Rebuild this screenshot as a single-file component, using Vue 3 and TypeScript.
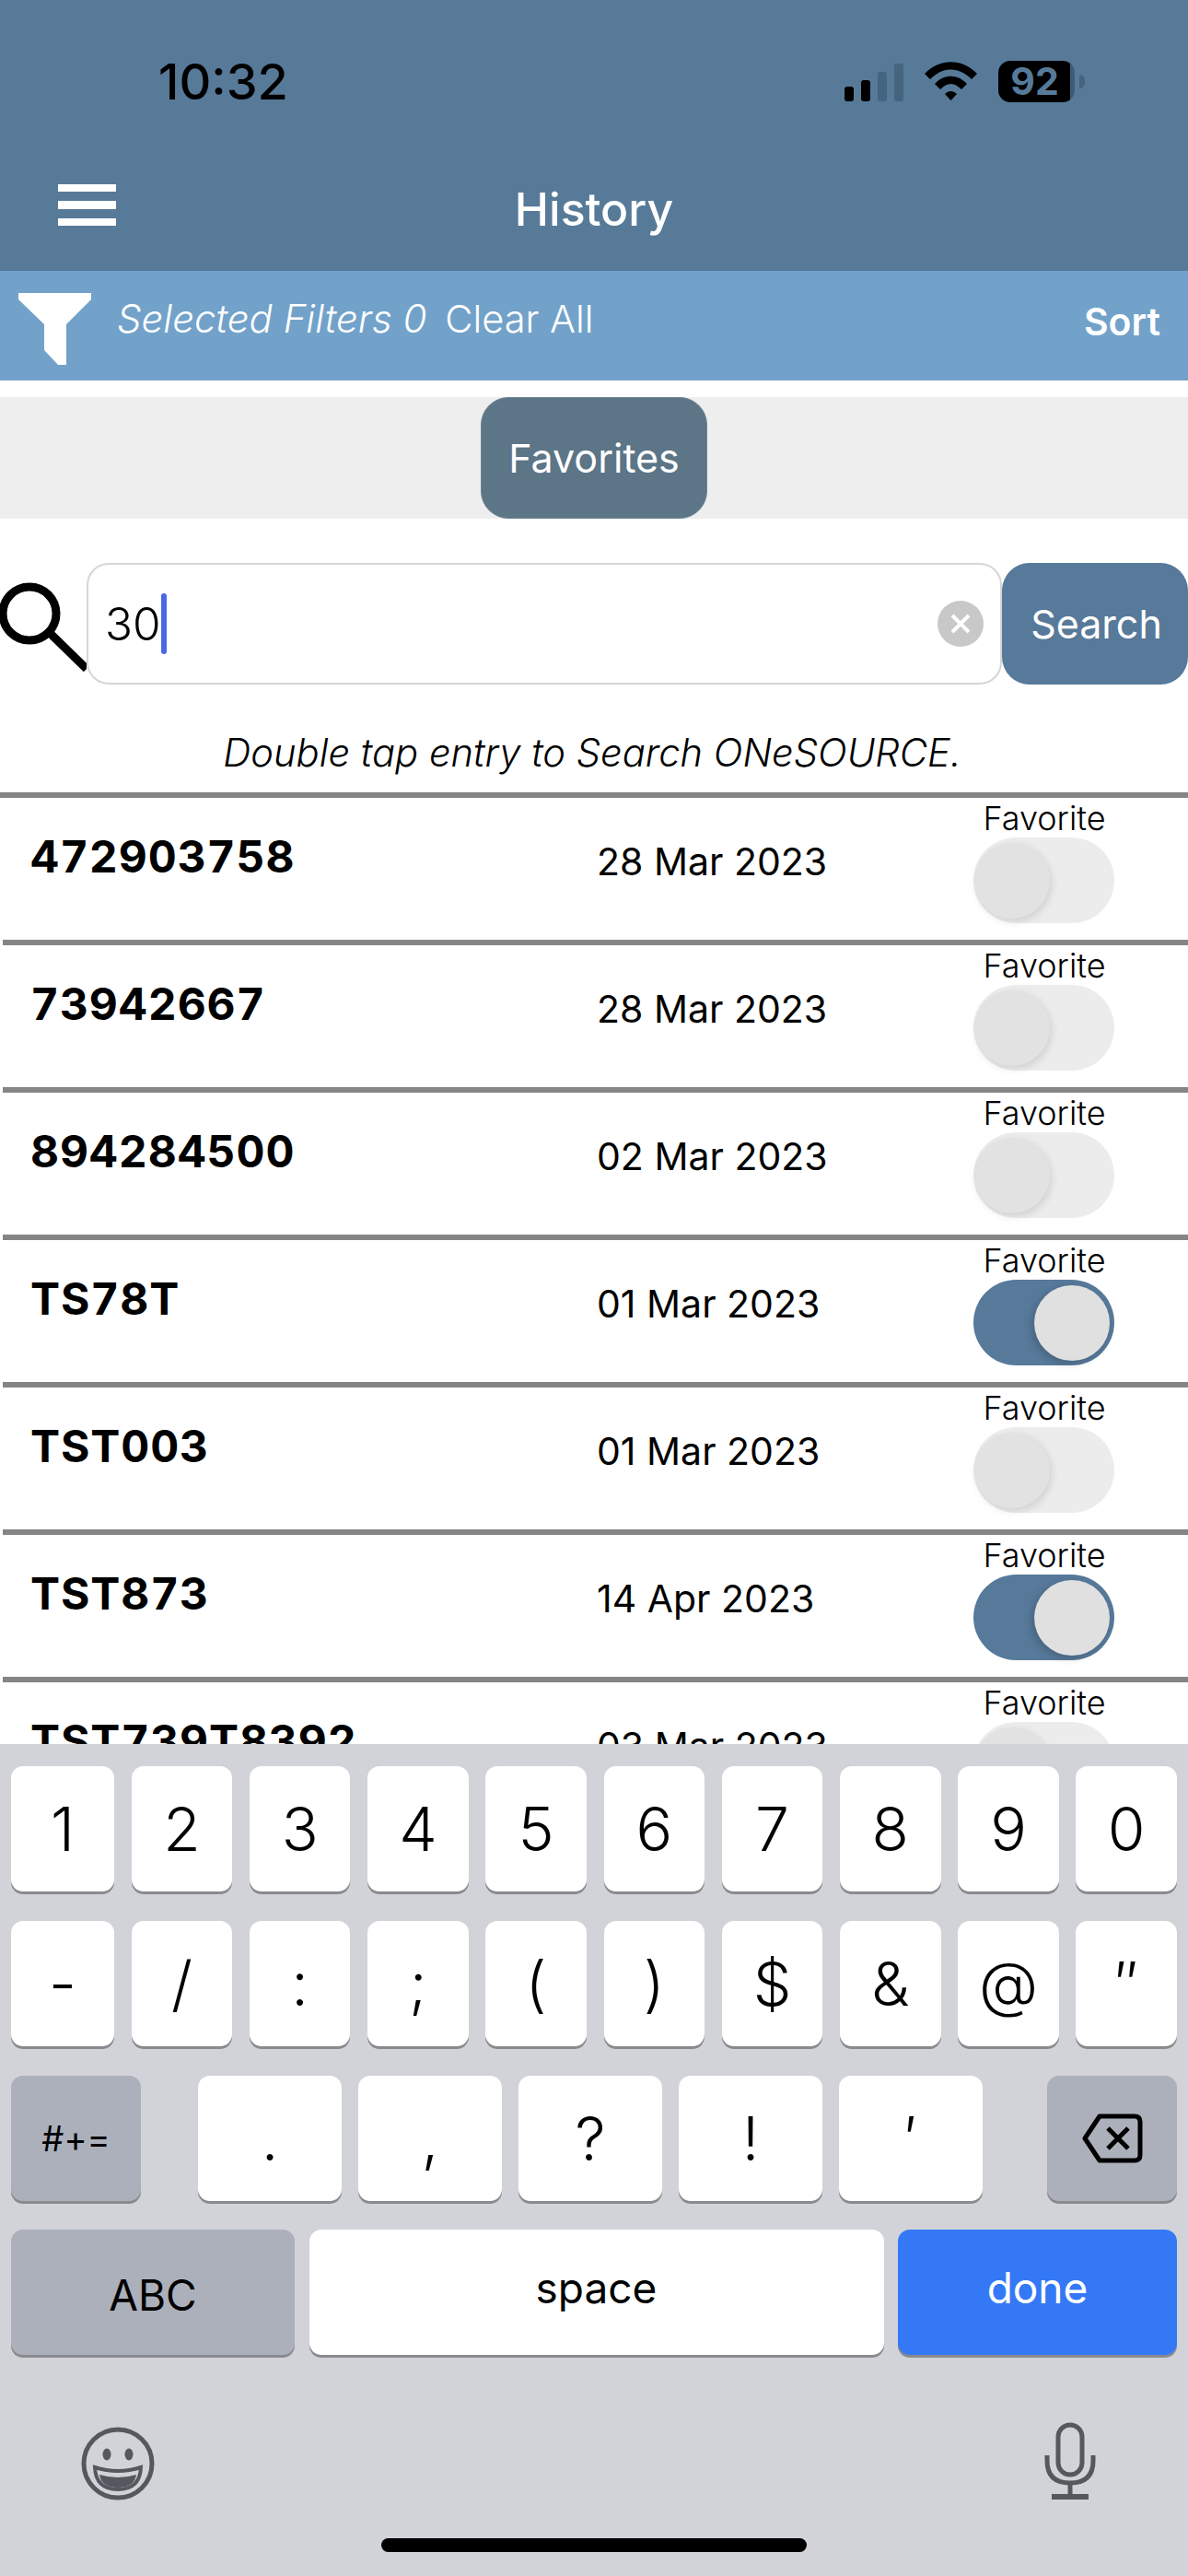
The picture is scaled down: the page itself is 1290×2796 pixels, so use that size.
<script setup lang="ts">
interface HistoryRow {
  name: string;
  date: string;
  favorite: boolean;
}

const rows: HistoryRow[] = [
  { name: '472903758', date: '28 Mar 2023', favorite: false },
  { name: '73942667', date: '28 Mar 2023', favorite: false },
  { name: '894284500', date: '02 Mar 2023', favorite: false },
  { name: 'TS78T', date: '01 Mar 2023', favorite: true },
  { name: 'TST003', date: '01 Mar 2023', favorite: false },
  { name: 'TST873', date: '14 Apr 2023', favorite: true },
  { name: 'TST739T8392', date: '03 Mar 2023', favorite: false },
];

const digits = ['1', '2', '3', '4', '5', '6', '7', '8', '9', '0'];
const symbols = ['-', '/', ':', ';', '(', ')', '$', '&', '@', '″'];
const punctuation = ['.', ',', '?', '!', '′'];
</script>

<template>
  <div class="screen">
    <header class="header">
      <div class="status">
        <span class="time">10:32</span>
        <div class="status-icons">
          <div class="signal">
            <i class="bar on b1"></i>
            <i class="bar on b2"></i>
            <i class="bar b3"></i>
            <i class="bar b4"></i>
          </div>
          <svg class="wifi" width="57" height="42" viewBox="0 0 57 42">
            <path d="M0 13C16-4 41-4 57 13L51 19C37 5 20 5 6 19Z" />
            <path d="M11 24C21 13 36 13 46 24L40 30C32 22 25 22 17 30Z" />
            <path d="M22 35C26 31 31 31 35 35L28.5 42Z" />
          </svg>
          <div class="battery"><span class="battery-level">92</span></div>
          <i class="battery-tip"></i>
        </div>
      </div>
      <div class="nav">
        <div class="menu"><i></i><i></i><i></i></div>
        <h1 class="title">History</h1>
      </div>
    </header>

    <div class="filter-bar">
      <svg class="funnel" width="80" height="80" viewBox="0 0 80 80">
        <polygon points="0,1 79,1 79,8 52,35 52,79 43,79 28,63 28,35 0,8" fill="#fff" />
      </svg>
      <span class="selected">Selected Filters 0</span>
      <span class="clear">Clear All</span>
      <span class="sort">Sort</span>
    </div>

    <div class="tabs">
      <button class="favorites">Favorites</button>
    </div>

    <div class="search-row">
      <svg class="magnifier" width="94" height="100" viewBox="0 0 94 100">
        <circle cx="32" cy="37" r="29" fill="none" stroke="#000" stroke-width="9" />
        <line x1="55" y1="59" x2="94" y2="97" stroke="#000" stroke-width="9" />
      </svg>
      <div class="search-input">
        <span class="typed">30</span><i class="caret"></i>
        <span class="clear-btn">
          <svg width="22" height="22" viewBox="0 0 22 22">
            <path d="M2 2L20 20M20 2L2 20" stroke="#fff" stroke-width="4" />
          </svg>
        </span>
      </div>
      <button class="search-btn">Search</button>
    </div>

    <p class="hint">Double tap entry to Search ONeSOURCE.</p>

    <div class="list">
      <div v-for="(row, i) in rows" :key="row.name" class="row" :class="{ first: i === 0 }">
        <span class="row-name">{{ row.name }}</span>
        <span class="row-date">{{ row.date }}</span>
        <div class="row-fav">
          <span class="fav-label">Favorite</span>
          <div class="toggle" :class="{ on: row.favorite }"><i class="thumb"></i></div>
        </div>
      </div>
    </div>

    <div class="keyboard">
      <div class="key-grid">
        <div v-for="k in digits" :key="k" class="key">{{ k }}</div>
      </div>
      <div class="key-grid second">
        <div v-for="k in symbols" :key="k" class="key">{{ k }}</div>
      </div>
      <div class="key-row third">
        <div class="key gray small">#+=</div>
        <div class="punct">
          <div v-for="k in punctuation" :key="k" class="key">{{ k }}</div>
        </div>
        <div class="key gray back">
          <svg width="66" height="54" viewBox="0 0 66 54" fill="none" stroke="#000" stroke-width="5">
            <path d="M19 3H57Q63 3 63 9V45Q63 51 57 51H19L3 27Z" stroke-linejoin="round" />
            <path d="M28 16L50 38M50 16L28 38" stroke-width="5" />
          </svg>
        </div>
      </div>
      <div class="key-row fourth">
        <div class="key gray word abc"><span>ABC</span></div>
        <div class="key word space"><span>space</span></div>
        <div class="key word done"><span>done</span></div>
      </div>
      <div class="kb-bottom">
        <svg class="emoji" width="80" height="80" viewBox="0 0 80 80" fill="none" stroke="#55585f" stroke-width="5">
          <circle cx="40" cy="40" r="37" />
          <ellipse cx="28" cy="30" rx="4.5" ry="6.5" fill="#55585f" stroke="none" />
          <ellipse cx="52" cy="30" rx="4.5" ry="6.5" fill="#55585f" stroke="none" />
          <path d="M15 44Q40 52 65 44Q64 68 40 68Q16 68 15 44Z" stroke-width="4" />
          <path d="M20 52Q40 58 60 52Q58 66 40 66Q22 66 20 52Z" fill="#55585f" stroke="none" />
        </svg>
        <svg width="56" height="84" viewBox="0 0 56 84" fill="none" stroke="#55585f" stroke-width="5">
          <rect x="15" y="3" width="26" height="54" rx="13" />
          <path d="M3 36V42Q3 66 28 66Q53 66 53 42V36" />
          <path d="M28 66V80" />
          <path d="M8 81H48" stroke-width="6" />
        </svg>
      </div>
      <div class="home-bar"></div>
    </div>
  </div>
</template>

<style scoped>
.screen {
  display: flex;
  flex-direction: column;
  width: 1290px;
  height: 2796px;
  overflow: hidden;
  background: #fff;
  font-family: Inter, "Liberation Sans", sans-serif;
  color: #000;
}

.header {
  height: 294px;
  background: #577a99;
}

.status {
  display: flex;
  justify-content: space-between;
  align-items: center;
  height: 176px;
  padding: 0 112px 0 172px;
  box-sizing: border-box;
}

.time {
  font-size: 54px;
  font-weight: 500;
}

.status-icons {
  display: flex;
  align-items: center;
}

.signal {
  display: flex;
  align-items: flex-end;
  gap: 7.5px;
  height: 41px;
  margin-top: 2px;
}

.bar {
  display: block;
  width: 10.5px;
  border-radius: 3px;
  background: #456480;
}

.bar.on {
  background: #000;
}

.b1 { height: 16px; }
.b2 { height: 23px; }
.b3 { height: 32px; }
.b4 { height: 41px; }

.wifi {
  margin-left: 23px;
  fill: #000;
}

.battery {
  display: flex;
  align-items: center;
  justify-content: center;
  width: 83px;
  height: 45px;
  margin-left: 23px;
  border-radius: 13px;
  background: linear-gradient(90deg, #000 94%, #3f5c77 94%);
}

.battery-level {
  padding-right: 4px;
  color: #577a99;
  font-size: 41px;
  font-weight: 700;
  line-height: 1;
}

.battery-tip {
  display: block;
  width: 6px;
  height: 15px;
  margin-left: 5px;
  border-radius: 0 8px 8px 0;
  background: #456480;
}

.nav {
  display: grid;
  grid-template-columns: 1fr auto 1fr;
  align-items: center;
  height: 102px;
  padding: 0 63px;
}

.menu {
  display: flex;
  flex-direction: column;
  gap: 10px;
  width: 63px;
  margin-top: -9px;
}

.menu i {
  display: block;
  height: 8.5px;
  background: #fff;
}

.title {
  margin: 0;
  color: #fff;
  font-size: 50px;
  font-weight: 500;
}

.filter-bar {
  display: flex;
  align-items: center;
  height: 119px;
  padding: 0 30px 0 20px;
  background: #72a2ca;
  color: #fff;
  font-size: 42px;
}

.funnel {
  margin-top: 6px;
}

.selected {
  margin: -16px 0 0 27px;
  font-style: italic;
  font-weight: 300;
}

.clear {
  margin: -16px 0 0 20px;
  font-size: 41.5px;
  font-weight: 300;
}

.sort {
  margin: -10px 0 0 auto;
  font-size: 41px;
  font-weight: 600;
}

.tabs {
  display: flex;
  justify-content: center;
  height: 132px;
  margin-top: 18px;
  background: #eee;
}

.favorites {
  width: 246px;
  height: 132px;
  padding: 0;
  border: 1px solid #6c8495;
  border-radius: 30px;
  background: #5c7587;
  color: #fff;
  font-family: inherit;
  font-size: 43px;
  font-weight: 400;
}

.search-row {
  display: flex;
  align-items: flex-start;
  height: 132px;
  margin-top: 48px;
}

.magnifier {
  flex: none;
  margin-top: 18px;
}

.search-input {
  display: flex;
  align-items: center;
  flex: 1;
  height: 132px;
  padding: 0 18px 0 18px;
  box-sizing: border-box;
  border: 2px solid #d6d6d6;
  border-radius: 24px;
}

.typed {
  font-size: 49.5px;
  font-weight: 300;
}

.caret {
  display: block;
  width: 6px;
  height: 66px;
  border-radius: 3px;
  background: #4c66e8;
}

.clear-btn {
  display: flex;
  align-items: center;
  justify-content: center;
  width: 50px;
  height: 50px;
  margin-left: auto;
  border-radius: 50%;
  background: #c8c8c8;
}

.search-btn {
  flex: none;
  width: 202px;
  height: 132px;
  padding: 0 0 0 3px;
  border: 0;
  border-radius: 30px;
  background: #57799a;
  color: #fff;
  font-family: inherit;
  font-size: 43px;
  font-weight: 400;
}

.hint {
  height: 117px;
  margin: 0;
  padding: 50px 4px 0 0;
  box-sizing: border-box;
  text-align: center;
  font-size: 41.7px;
  font-style: italic;
  font-weight: 300;
  line-height: 48px;
}

.list {
  flex: 1;
  overflow: hidden;
}

.row {
  display: flex;
  height: 160px;
  margin-left: 3px;
  box-sizing: border-box;
  border-top: 6px solid #858585;
}

.row.first {
  margin-left: 0;
}

.row-name {
  width: 645px;
  padding: 35px 0 0 30px;
  box-sizing: border-box;
  font-size: 48px;
  font-weight: 700;
  font-variant-numeric: tabular-nums;
  letter-spacing: 0.9px;
  line-height: 58px;
}

.row.first .row-name {
  width: 648px;
  padding-left: 33px;
}

.row-date {
  width: 406px;
  padding-top: 45px;
  font-size: 41px;
  font-weight: 400;
  line-height: 48px;
}

.row-fav {
  display: flex;
  flex-direction: column;
  width: 156px;
  align-items: center;
  padding-top: 2px;
}

.fav-label {
  padding-left: 4px;
  font-size: 36px;
  font-weight: 300;
  line-height: 40px;
  white-space: nowrap;
}

.toggle {
  display: flex;
  align-items: center;
  flex: none;
  width: 153px;
  height: 93px;
  margin: 1px 0 0 3px;
  padding: 0 5px 0 1px;
  box-sizing: border-box;
  border-radius: 47px;
  background: #ececec;
}

.toggle.on {
  justify-content: flex-end;
  background: #57799a;
}

.thumb {
  display: block;
  width: 82px;
  height: 82px;
  border-radius: 50%;
  background: #e2e2e2;
  box-shadow: 2px 3px 8px rgb(0 0 0 / 12%);
}

.toggle.on .thumb {
  background: #e0e0e0;
  box-shadow: -3px 3px 8px rgb(0 0 0 / 18%);
}

.keyboard {
  flex: none;
  height: 903px;
  padding: 24px 12px 0;
  box-sizing: border-box;
  background: #d1d3d9;
}

.key-grid {
  display: grid;
  grid-template-columns: 112px repeat(9, 1fr);
  gap: 18.7px;
}

.second {
  margin-top: 32px;
}

.key {
  display: flex;
  align-items: center;
  justify-content: center;
  height: 136px;
  border-radius: 13px;
  background: #fff;
  box-shadow: 0 3px 0 #898a8e;
  font-size: 66px;
  font-weight: 300;
}

.key-row {
  display: flex;
  justify-content: space-between;
}

.third {
  margin-top: 32px;
}

.gray {
  background: #abb0ba;
}

.small {
  width: 141px;
  font-size: 38px;
  font-weight: 400;
}

.back {
  width: 141px;
}

.punct {
  display: flex;
  gap: 18px;
  margin-right: 8px;
}

.punct .key {
  width: 156px;
}

.fourth {
  margin-top: 31px;
}

.word {
  font-size: 46px;
  font-weight: 400;
}

.abc span {
  margin-top: 6px;
}

.space span,
.done span {
  margin-top: -10px;
}

.abc {
  width: 308px;
}

.space {
  width: 624px;
}

.done {
  width: 303px;
  background: #3478f6;
  color: #fff;
}

.kb-bottom {
  display: flex;
  justify-content: space-between;
  align-items: center;
  height: 84px;
  margin-top: 73px;
  padding: 0 88px 0 76px;
}

.emoji {
  margin-top: 6px;
}

.home-bar {
  width: 462px;
  height: 15px;
  margin: 42px auto 0;
  border-radius: 8px;
  background: #000;
}
</style>

<style>
html,
body {
  margin: 0;
  background: #fff;
}
</style>
